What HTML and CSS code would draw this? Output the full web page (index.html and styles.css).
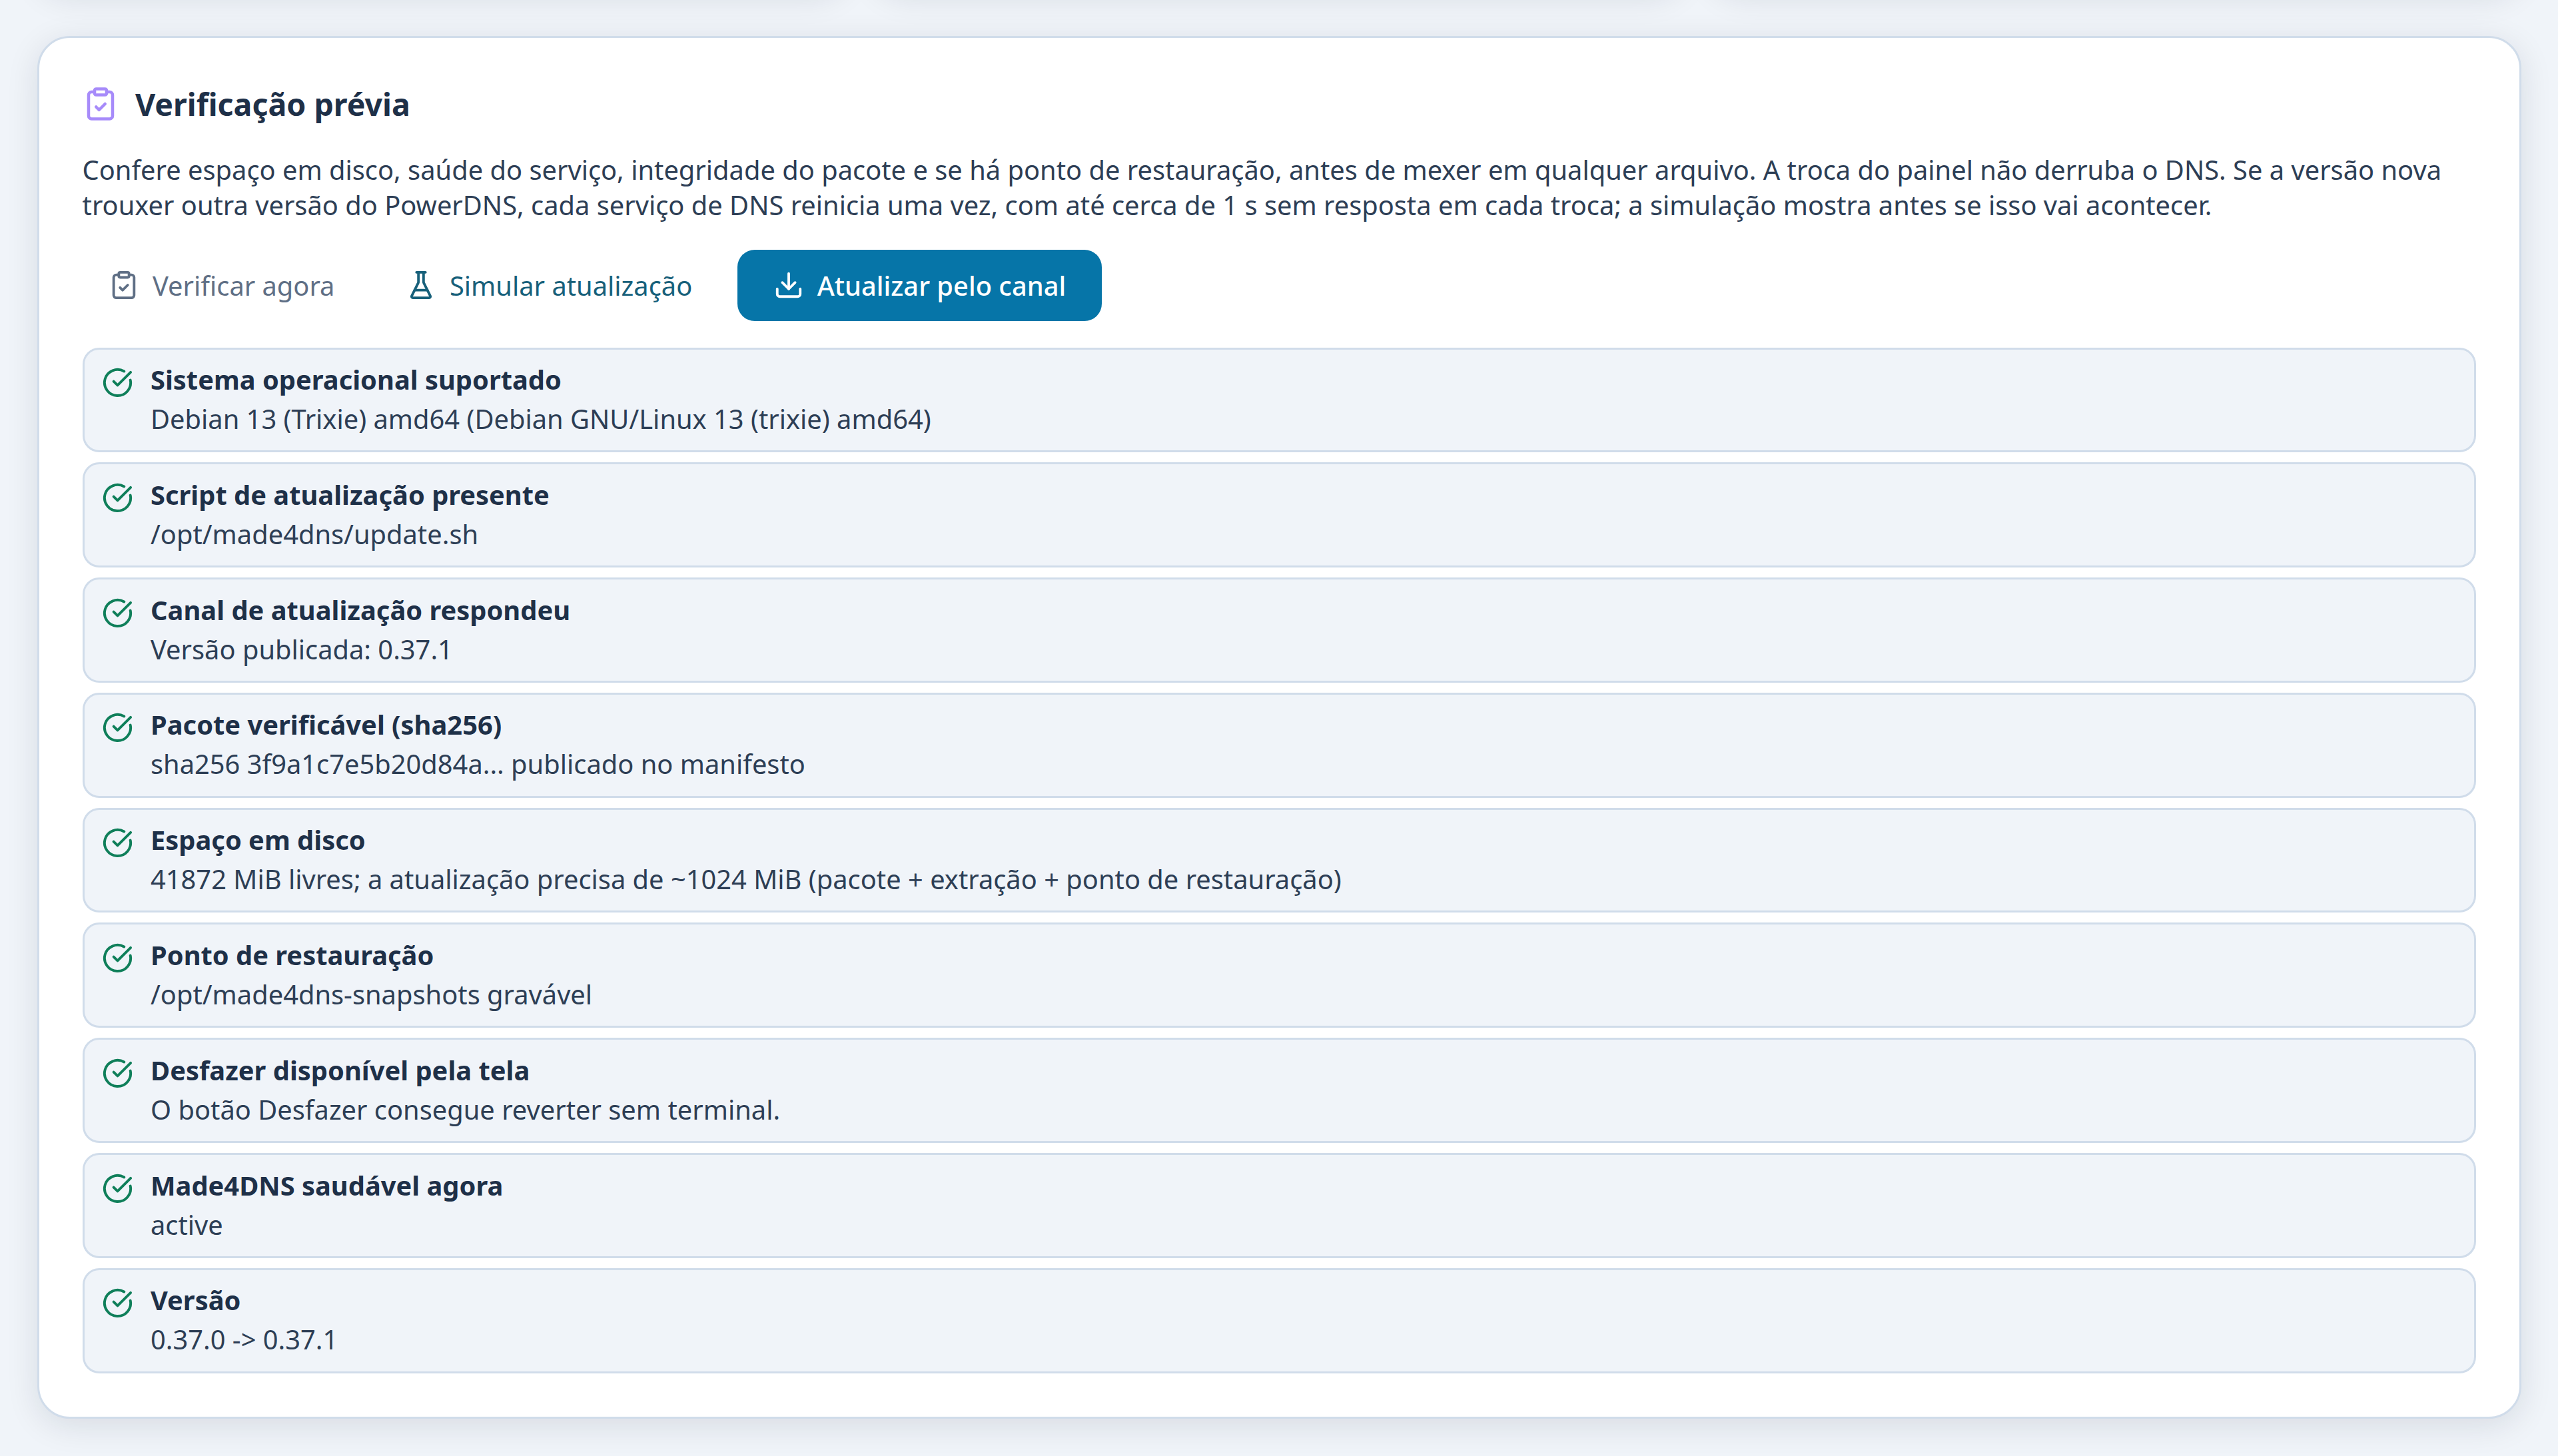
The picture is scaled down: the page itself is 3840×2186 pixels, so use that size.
FILE: index.html
```html
<!DOCTYPE html>
<html lang="pt-BR">
<head>
<meta charset="utf-8">
<title>Verificação prévia</title>
<link rel="stylesheet" href="styles.css">
</head>
<body>
<div class="page">
  <div class="stats"><section class="stat"></section><section class="stat"></section><section class="stat"></section></div>
  <section class="panel">
    <header class="panel-head">
      <svg class="ico ico-title" viewBox="0 0 24 24"><rect x="8" y="2" width="8" height="4" rx="1"/><path d="M16 4h2a2 2 0 0 1 2 2v14a2 2 0 0 1-2 2H6a2 2 0 0 1-2-2V6a2 2 0 0 1 2-2h2"/><path d="m9 14 2 2 4-4"/></svg>
      <h2 class="panel-title">Verificação prévia</h2>
    </header>
    <p class="panel-desc">Confere espaço em disco, saúde do serviço, integridade do pacote e se há ponto de restauração, antes de mexer em qualquer arquivo. A troca do painel não derruba o DNS. Se a versão nova trouxer outra versão do PowerDNS, cada serviço de DNS reinicia uma vez, com até cerca de 1 s sem resposta em cada troca; a simulação mostra antes se isso vai acontecer.</p>
    <div class="actions">
      <button class="btn btn-muted"><svg class="ico" viewBox="0 0 24 24"><rect x="8" y="2" width="8" height="4" rx="1"/><path d="M16 4h2a2 2 0 0 1 2 2v14a2 2 0 0 1-2 2H6a2 2 0 0 1-2-2V6a2 2 0 0 1 2-2h2"/><path d="m9 14 2 2 4-4"/></svg>Verificar agora</button>
      <button class="btn btn-ghost"><svg class="ico" viewBox="0 0 24 24"><path d="M10 2v7.527a2 2 0 0 1-.211.896L4.72 20.55a1 1 0 0 0 .9 1.45h12.76a1 1 0 0 0 .9-1.45l-5.069-10.127A2 2 0 0 1 14 9.527V2"/><path d="M8.5 2h7"/><path d="M7 16h10"/></svg>Simular atualização</button>
      <button class="btn btn-primary"><svg class="ico" viewBox="0 0 24 24"><path d="M21 15v4a2 2 0 0 1-2 2H5a2 2 0 0 1-2-2v-4"/><path d="m7 10 5 5 5-5"/><path d="M12 15V3"/></svg>Atualizar pelo canal</button>
    </div>
    <ul class="checks">
      <li class="check"><svg class="ico ico-ok" viewBox="0 0 24 24"><path d="M21.801 10A10 10 0 1 1 17 3.335"/><path d="m9 11 3 3L22 4"/></svg><div><div class="check-title">Sistema operacional suportado</div><div class="check-detail">Debian 13 (Trixie) amd64 (Debian GNU/Linux 13 (trixie) amd64)</div></div></li>
      <li class="check"><svg class="ico ico-ok" viewBox="0 0 24 24"><path d="M21.801 10A10 10 0 1 1 17 3.335"/><path d="m9 11 3 3L22 4"/></svg><div><div class="check-title">Script de atualização presente</div><div class="check-detail">/opt/made4dns/update.sh</div></div></li>
      <li class="check"><svg class="ico ico-ok" viewBox="0 0 24 24"><path d="M21.801 10A10 10 0 1 1 17 3.335"/><path d="m9 11 3 3L22 4"/></svg><div><div class="check-title">Canal de atualização respondeu</div><div class="check-detail">Versão publicada: 0.37.1</div></div></li>
      <li class="check"><svg class="ico ico-ok" viewBox="0 0 24 24"><path d="M21.801 10A10 10 0 1 1 17 3.335"/><path d="m9 11 3 3L22 4"/></svg><div><div class="check-title">Pacote verificável (sha256)</div><div class="check-detail">sha256 3f9a1c7e5b20d84a... publicado no manifesto</div></div></li>
      <li class="check"><svg class="ico ico-ok" viewBox="0 0 24 24"><path d="M21.801 10A10 10 0 1 1 17 3.335"/><path d="m9 11 3 3L22 4"/></svg><div><div class="check-title">Espaço em disco</div><div class="check-detail">41872 MiB livres; a atualização precisa de ~1024 MiB (pacote + extração + ponto de restauração)</div></div></li>
      <li class="check"><svg class="ico ico-ok" viewBox="0 0 24 24"><path d="M21.801 10A10 10 0 1 1 17 3.335"/><path d="m9 11 3 3L22 4"/></svg><div><div class="check-title">Ponto de restauração</div><div class="check-detail">/opt/made4dns-snapshots gravável</div></div></li>
      <li class="check"><svg class="ico ico-ok" viewBox="0 0 24 24"><path d="M21.801 10A10 10 0 1 1 17 3.335"/><path d="m9 11 3 3L22 4"/></svg><div><div class="check-title">Desfazer disponível pela tela</div><div class="check-detail">O botão Desfazer consegue reverter sem terminal.</div></div></li>
      <li class="check"><svg class="ico ico-ok" viewBox="0 0 24 24"><path d="M21.801 10A10 10 0 1 1 17 3.335"/><path d="m9 11 3 3L22 4"/></svg><div><div class="check-title">Made4DNS saudável agora</div><div class="check-detail">active</div></div></li>
      <li class="check"><svg class="ico ico-ok" viewBox="0 0 24 24"><path d="M21.801 10A10 10 0 1 1 17 3.335"/><path d="m9 11 3 3L22 4"/></svg><div><div class="check-title">Versão</div><div class="check-detail">0.37.0 -&gt; 0.37.1</div></div></li>
    </ul>
  </section>
</div>
</body>
</html>
```
FILE: styles.css
```css
* { box-sizing: border-box; }
html, body { margin: 0; height: 100%; overflow: hidden; }
body {
  background: #f0f4f9;
  color: #2d3e55;
  font-family: "Noto Sans", sans-serif;
  font-size: 39.85px;
  line-height: 53px;
}
.page {
  height: 2186px;
  padding: 0 55px 0 56px;
  overflow: hidden;
}
.stats {
  display: grid;
  grid-template-columns: repeat(3, 1fr);
  gap: 39px;
  height: 100px;
  margin-top: -115px;
  margin-bottom: 69px;
}
.stat {
  background: #fff;
  border-radius: 49px;
  box-shadow: 0 10px 49px rgba(15, 23, 42, 0.11);
}
.panel {
  height: 2076px;
  padding: 54px 65.5px 0 64.5px;
  background: #fff;
  border: 3px solid #d0dcea;
  border-radius: 49px;
  box-shadow: 0 10px 49px rgba(15, 23, 42, 0.11);
}
.panel-head {
  display: flex;
  align-items: center;
  gap: 25.5px;
  height: 90px;
}
.ico {
  flex: none;
  width: 46px;
  height: 46px;
  fill: none;
  stroke: currentColor;
  stroke-width: 2;
  stroke-linecap: round;
  stroke-linejoin: round;
}
.ico-title {
  width: 54px;
  height: 54px;
  color: #a78bfa;
}
.panel-title {
  margin: 0;
  color: #1e3048;
  font-size: 46.5px;
  font-weight: 700;
  line-height: 60px;
}
.panel-desc {
  margin: 26.5px 0 0;
}
.actions {
  display: flex;
  gap: 28.5px;
  margin-top: 41px;
  margin-left: 0.5px;
}
.btn {
  display: inline-flex;
  align-items: center;
  gap: 20px;
  height: 107px;
  padding: 0 39px;
  border: 0;
  border-radius: 26px;
  background: none;
  font: inherit;
}
.btn-muted { color: #5f6f85; }
.btn-ghost { color: #17607a; }
.btn-primary {
  padding: 0 54px;
  background: #0675a8;
  color: #fff;
  font-weight: 500;
}
.checks {
  display: flex;
  flex-direction: column;
  gap: 15px;
  margin: 40px 0 0;
  padding: 0;
  list-style: none;
}
.check {
  display: flex;
  align-items: flex-start;
  gap: 26.5px;
  height: 157.8px;
  padding: 18.5px 26px;
  background: #f0f4f9;
  border: 3px solid #d0dcea;
  border-radius: 25px;
}
.ico-ok {
  width: 47px;
  height: 47px;
  margin-top: 8px;
  color: #0f7f5a;
}
.check-title {
  color: #1e3048;
  font-weight: 700;
}
.check-detail {
  margin-top: 6px;
}
```
